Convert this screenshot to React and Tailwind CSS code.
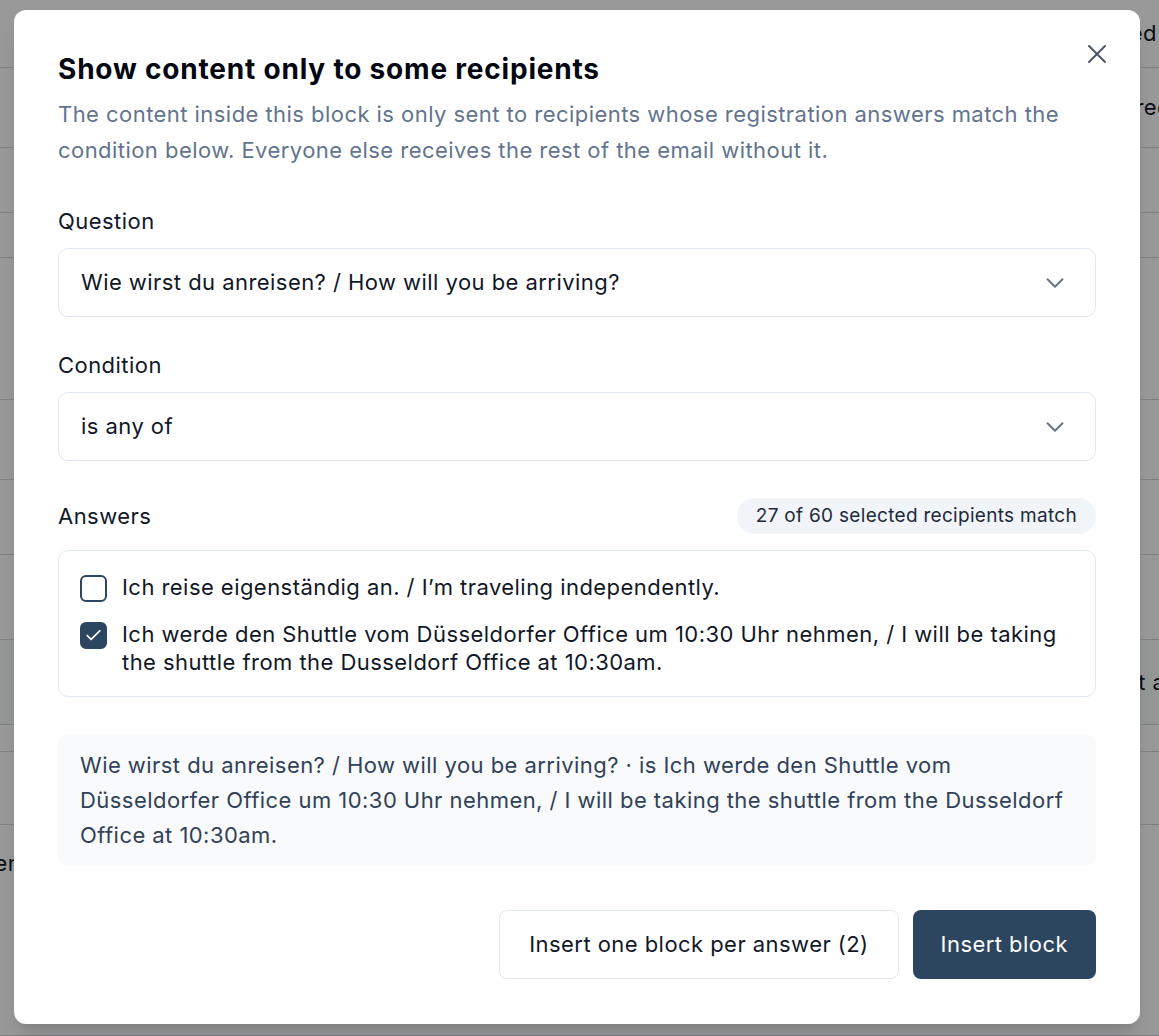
import React, { useState } from "react";
import { ChevronDown, X, Check } from "lucide-react";

const backdropRows = [
  { h: "h-[68px]", text: "Confirmed", side: "right", shift: "mr-[2px]" },
  { h: "h-[80px]", text: "Registered", side: "right", shift: "mr-[-12px]" },
  { h: "h-[65px]" },
  { h: "h-[45px]" },
  { h: "h-[142px]" },
  { h: "h-[80px]" },
  { h: "h-[75px]" },
  { h: "h-[85px]" },
  { h: "h-[85px]", text: "Start at", side: "right", shift: "mr-[-14px]", band: true },
  { h: "h-[27px]" },
  { h: "h-[73px]" },
  { h: "h-[211px]", text: "Hidden", side: "left", shift: "ml-[-56px]", top: "pt-[22px]" },
];

function Backdrop() {
  return (
    <div className="bg-white">
      {backdropRows.map((row, i) => (
        <div
          key={i}
          className={`${row.h} border-b border-gray-300 flex overflow-hidden ${row.band ? "bg-gray-50" : ""} ${
            row.side === "left" ? "justify-start items-start" : "justify-end items-center"
          } ${row.top || ""}`}
        >
          {row.text && (
            <span className={`whitespace-nowrap text-[22px] text-gray-900 ${row.shift}`}>{row.text}</span>
          )}
        </div>
      ))}
    </div>
  );
}

function SelectBox({ value }) {
  return (
    <div className="mt-[11px] h-[69px] border border-slate-200 rounded-[10px] flex items-center justify-between pl-[22px] pr-[25px] bg-white">
      <span className="text-[22px] text-gray-900">{value}</span>
      <ChevronDown size={30} strokeWidth={1.5} className="text-gray-500" />
    </div>
  );
}

function CheckBox({ checked }) {
  return (
    <div
      className={`mt-[2px] w-[27px] h-[27px] shrink-0 rounded-[6px] border-2 border-[#2c4660] flex items-center justify-center ${
        checked ? "bg-[#2c4660]" : "bg-white"
      }`}
    >
      {checked && <Check size={19} strokeWidth={2.2} className="text-white" />}
    </div>
  );
}

export default function App() {
  const [answers, setAnswers] = useState([false, true]);

  function toggle(i) {
    setAnswers(answers.map((a, j) => (j === i ? !a : a)));
  }

  const options = [
    "Ich reise eigenständig an. / I’m traveling independently.",
    "Ich werde den Shuttle vom Düsseldorfer Office um 10:30 Uhr nehmen, / I will be taking the shuttle from the Dusseldorf Office at 10:30am.",
  ];

  return (
    <div
      className="relative min-h-[1036px] overflow-hidden tracking-[0.45px]"
      style={{ fontFamily: 'Inter, "Liberation Sans", Arial, sans-serif' }}
    >
      <Backdrop />
      <div className="absolute inset-0 bg-black/40"></div>
      <div className="absolute left-[14px] top-[10px] w-[1126px] bg-white rounded-[12px] shadow-xl pt-[41px] pb-[45px] px-[44px]">
        <button className="absolute right-[27px] top-[28px] text-gray-600">
          <X size={32} strokeWidth={1.5} />
        </button>
        <h2 className="text-[28px] leading-[36px] font-bold tracking-[0.8px] text-gray-950">
          Show content only to some recipients
        </h2>
        <p className="mt-[9px] text-[22px] leading-[36px] text-slate-500">
          The content inside this block is only sent to recipients whose registration answers match the condition below.
          Everyone else receives the rest of the email without it.
        </p>

        <div className="mt-[37px] text-[22px] leading-[32px] text-gray-900">Question</div>
        <SelectBox value="Wie wirst du anreisen? / How will you be arriving?" />

        <div className="mt-[32px] text-[22px] leading-[32px] text-gray-900">Condition</div>
        <SelectBox value="is any of" />

        <div className="mt-[37px] flex items-center justify-between h-[36px]">
          <span className="text-[22px] text-gray-900">Answers</span>
          <span className="h-[36px] flex items-center px-[19px] rounded-full bg-slate-100 text-[19px] tracking-[0.3px] text-gray-800">
            27 of 60 selected recipients match
          </span>
        </div>

        <div className="mt-[16px] border border-slate-200 rounded-[10px] pt-[22px] pb-[20px] pl-[21px] pr-[22px] flex flex-col gap-[18px]">
          {options.map((opt, i) => (
            <label key={i} className="flex items-start gap-[15px] cursor-pointer" onClick={() => toggle(i)}>
              <CheckBox checked={answers[i]} />
              <span className="text-[22px] leading-[28px] text-gray-900">{opt}</span>
            </label>
          ))}
        </div>

        <div className="mt-[37px] bg-slate-50 rounded-[10px] px-[22px] pt-[14px] pb-[13px] text-[22px] leading-[35px] text-slate-700">
          Wie wirst du anreisen? / How will you be arriving? · is Ich werde den Shuttle vom Düsseldorfer Office um 10:30 Uhr
          nehmen, / I will be taking the shuttle from the Dusseldorf Office at 10:30am.
        </div>

        <div className="mt-[44px] flex justify-end gap-[14px]">
          <button className="h-[69px] px-[29px] rounded-[8px] border border-slate-200 bg-white text-[22px] text-gray-900">
            Insert one block per answer (2)
          </button>
          <button className="h-[69px] px-[28px] rounded-[8px] bg-[#2c4660] text-[22px] text-white">Insert block</button>
        </div>
      </div>
    </div>
  );
}
